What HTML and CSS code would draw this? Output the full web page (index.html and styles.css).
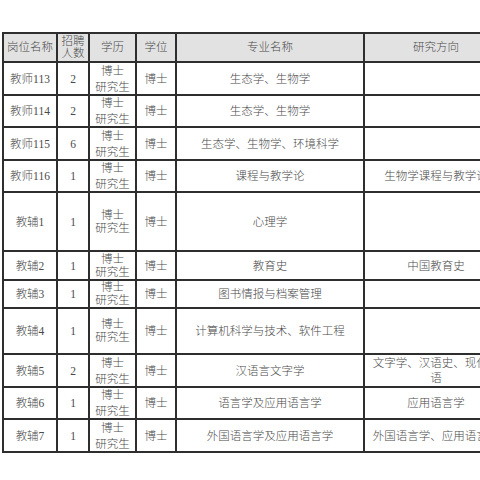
FILE: index.html
```html
<!DOCTYPE html>
<html lang="zh">
<head>
<meta charset="utf-8">
<title>岗位表</title>
<link rel="stylesheet" href="styles.css">
</head>
<body>
<div class="sheet">
  <div class="c h">岗位名称</div><div class="c h">招聘<br>人数</div><div class="c h">学历</div><div class="c h">学位</div><div class="c h">专业名称</div><div class="c h">研究方向</div>

  <div class="c">教师113</div><div class="c">2</div><div class="c lt">博士<br>研究生</div><div class="c">博士</div><div class="c">生态学、生物学</div><div class="c"></div>
  <div class="c">教师114</div><div class="c">2</div><div class="c lt">博士<br>研究生</div><div class="c">博士</div><div class="c">生态学、生物学</div><div class="c"></div>
  <div class="c">教师115</div><div class="c">6</div><div class="c lt">博士<br>研究生</div><div class="c">博士</div><div class="c">生态学、生物学、环境科学</div><div class="c"></div>
  <div class="c">教师116</div><div class="c">1</div><div class="c lt">博士<br>研究生</div><div class="c">博士</div><div class="c">课程与教学论</div><div class="c nw">生物学课程与教学论</div>

  <div class="c">教辅1</div><div class="c">1</div><div class="c ls">博士<br>研究生</div><div class="c">博士</div><div class="c">心理学</div><div class="c"></div>
  <div class="c">教辅2</div><div class="c">1</div><div class="c ls">博士<br>研究生</div><div class="c">博士</div><div class="c">教育史</div><div class="c">中国教育史</div>
  <div class="c">教辅3</div><div class="c">1</div><div class="c ls">博士<br>研究生</div><div class="c">博士</div><div class="c">图书情报与档案管理</div><div class="c"></div>
  <div class="c">教辅4</div><div class="c">1</div><div class="c ls">博士<br>研究生</div><div class="c">博士</div><div class="c">计算机科学与技术、软件工程</div><div class="c"></div>

  <div class="c">教辅5</div><div class="c">2</div><div class="c lt">博士<br>研究生</div><div class="c">博士</div><div class="c">汉语言文字学</div><div class="c nw lm">文字学、汉语史、现代汉<br>语</div>
  <div class="c">教辅6</div><div class="c">1</div><div class="c lt">博士<br>研究生</div><div class="c">博士</div><div class="c">语言学及应用语言学</div><div class="c">应用语言学</div>
  <div class="c">教辅7</div><div class="c">1</div><div class="c lt">博士<br>研究生</div><div class="c">博士</div><div class="c">外国语言学及应用语言学</div><div class="c nw">外国语言学、应用语言学</div>
</div>
</body>
</html>
```

FILE: styles.css
```css
html, body {
  margin: 0;
  padding: 0;
  background: #ffffff;
  overflow: hidden;
}

body {
  font-family: "Liberation Serif", "Noto Sans CJK SC", serif;
  font-size: 11.5px;
  font-weight: 300;
  color: #4a4a4a;
}

.sheet {
  display: grid;
  width: max-content;
  margin: 32px 0 0 2px;
  padding: 2px;
  gap: 2px;
  background: #2e2e2e;
  grid-template-columns: 52px 30px 45px 38px 186px 142px;
  grid-template-rows: 27px 31px 30px 31px 30px 57px 27px 26px 44px 31px 30px 31px;
}

.c {
  background: #ffffff;
  display: flex;
  align-items: center;
  justify-content: center;
  text-align: center;
  line-height: 14px;
  overflow: hidden;
}

.h {
  background: #e2e2e2;
  line-height: 11.5px;
}

.lt {
  line-height: 16px;
}

.ls {
  line-height: 13px;
}

.lm {
  line-height: 15px;
}

.nw {
  white-space: nowrap;
}
```
